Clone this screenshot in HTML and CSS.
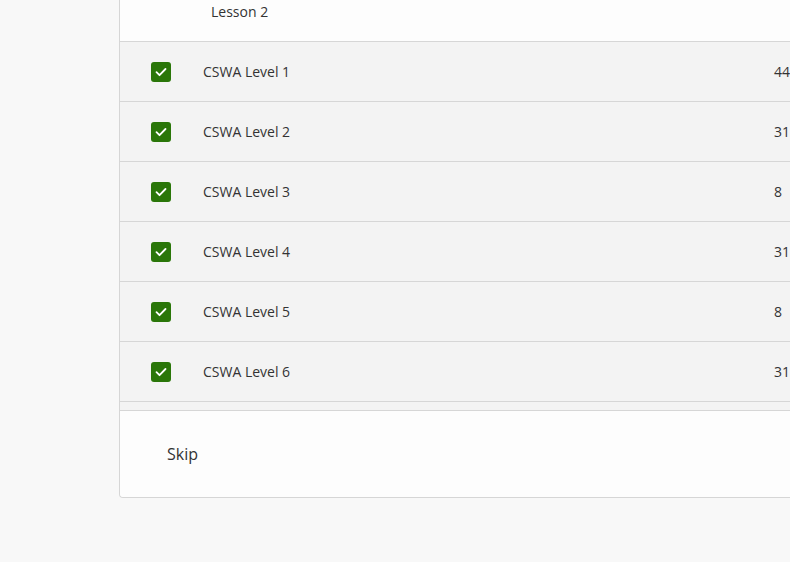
FILE: index.html
```html
<!DOCTYPE html>
<html>
<head>
<meta charset="utf-8">
<link rel="stylesheet" href="styles.css">
</head>
<body>
<div class="page">
  <div class="card">
    <div class="card-header">Lesson 2</div>
    <div class="list">
      <div class="row"><span class="check"><svg viewBox="0 0 20 20" width="20" height="20"><path d="M5.5 10.2l3 3 6-6.2" fill="none" stroke="#fff" stroke-width="1.8" stroke-linecap="round" stroke-linejoin="round"/></svg></span><span class="label">CSWA Level 1</span><span class="num">44</span></div>
      <div class="row"><span class="check"><svg viewBox="0 0 20 20" width="20" height="20"><path d="M5.5 10.2l3 3 6-6.2" fill="none" stroke="#fff" stroke-width="1.8" stroke-linecap="round" stroke-linejoin="round"/></svg></span><span class="label">CSWA Level 2</span><span class="num">31</span></div>
      <div class="row"><span class="check"><svg viewBox="0 0 20 20" width="20" height="20"><path d="M5.5 10.2l3 3 6-6.2" fill="none" stroke="#fff" stroke-width="1.8" stroke-linecap="round" stroke-linejoin="round"/></svg></span><span class="label">CSWA Level 3</span><span class="num">8</span></div>
      <div class="row"><span class="check"><svg viewBox="0 0 20 20" width="20" height="20"><path d="M5.5 10.2l3 3 6-6.2" fill="none" stroke="#fff" stroke-width="1.8" stroke-linecap="round" stroke-linejoin="round"/></svg></span><span class="label">CSWA Level 4</span><span class="num">31</span></div>
      <div class="row"><span class="check"><svg viewBox="0 0 20 20" width="20" height="20"><path d="M5.5 10.2l3 3 6-6.2" fill="none" stroke="#fff" stroke-width="1.8" stroke-linecap="round" stroke-linejoin="round"/></svg></span><span class="label">CSWA Level 5</span><span class="num">8</span></div>
      <div class="row"><span class="check"><svg viewBox="0 0 20 20" width="20" height="20"><path d="M5.5 10.2l3 3 6-6.2" fill="none" stroke="#fff" stroke-width="1.8" stroke-linecap="round" stroke-linejoin="round"/></svg></span><span class="label">CSWA Level 6</span><span class="num">31</span></div>
      <div class="row"><span class="check"><svg viewBox="0 0 20 20" width="20" height="20"><path d="M5.5 10.2l3 3 6-6.2" fill="none" stroke="#fff" stroke-width="1.8" stroke-linecap="round" stroke-linejoin="round"/></svg></span><span class="label">CSWA Level 7</span><span class="num">8</span></div>
    </div>
    <div class="card-footer"><span class="skip">Skip</span></div>
  </div>
</div>
</body>
</html>
```

FILE: styles.css
```css
html, body {
  margin: 0;
  padding: 0;
  background: #f8f8f8;
  font-family: "Open Sans", "Liberation Sans", sans-serif;
  color: #333;
  overflow: hidden;
}

.page {
  width: 790px;
  height: 562px;
  padding-left: 119px;
  box-sizing: border-box;
  overflow: hidden;
}

.card {
  width: 740px;
  border: 1px solid #d6d6d6;
  border-top: none;
  border-radius: 0 0 4px 4px;
  background: #fdfdfd;
}

.card-header {
  height: 42px;
  box-sizing: border-box;
  padding-left: 91px;
  line-height: 24px;
  font-size: 14px;
  color: #333;
  border-bottom: 1px solid #d6d6d6;
  background: #fdfdfd;
}

.list {
  height: 368px;
  overflow: hidden;
  background: #f3f3f3;
  border-bottom: 1px solid #d6d6d6;
}

.row {
  height: 60px;
  box-sizing: border-box;
  border-bottom: 1px solid #d6d6d6;
  display: grid;
  grid-template-columns: 20px 539px auto;
  column-gap: 32px;
  align-items: center;
  padding-left: 31px;
  font-size: 14px;
  background: #f3f3f3;
}

.check {
  width: 20px;
  height: 20px;
  border-radius: 3px;
  background: #2a7609;
  display: flex;
  margin-top: 1px;
}

.label, .num {
  color: #333;
}

.card-footer {
  height: 86px;
  display: flex;
  align-items: center;
  padding-left: 47px;
  font-size: 16px;
  background: #fdfdfd;
  border-radius: 0 0 4px 4px;
}

.skip {
  color: #333;
}
```
